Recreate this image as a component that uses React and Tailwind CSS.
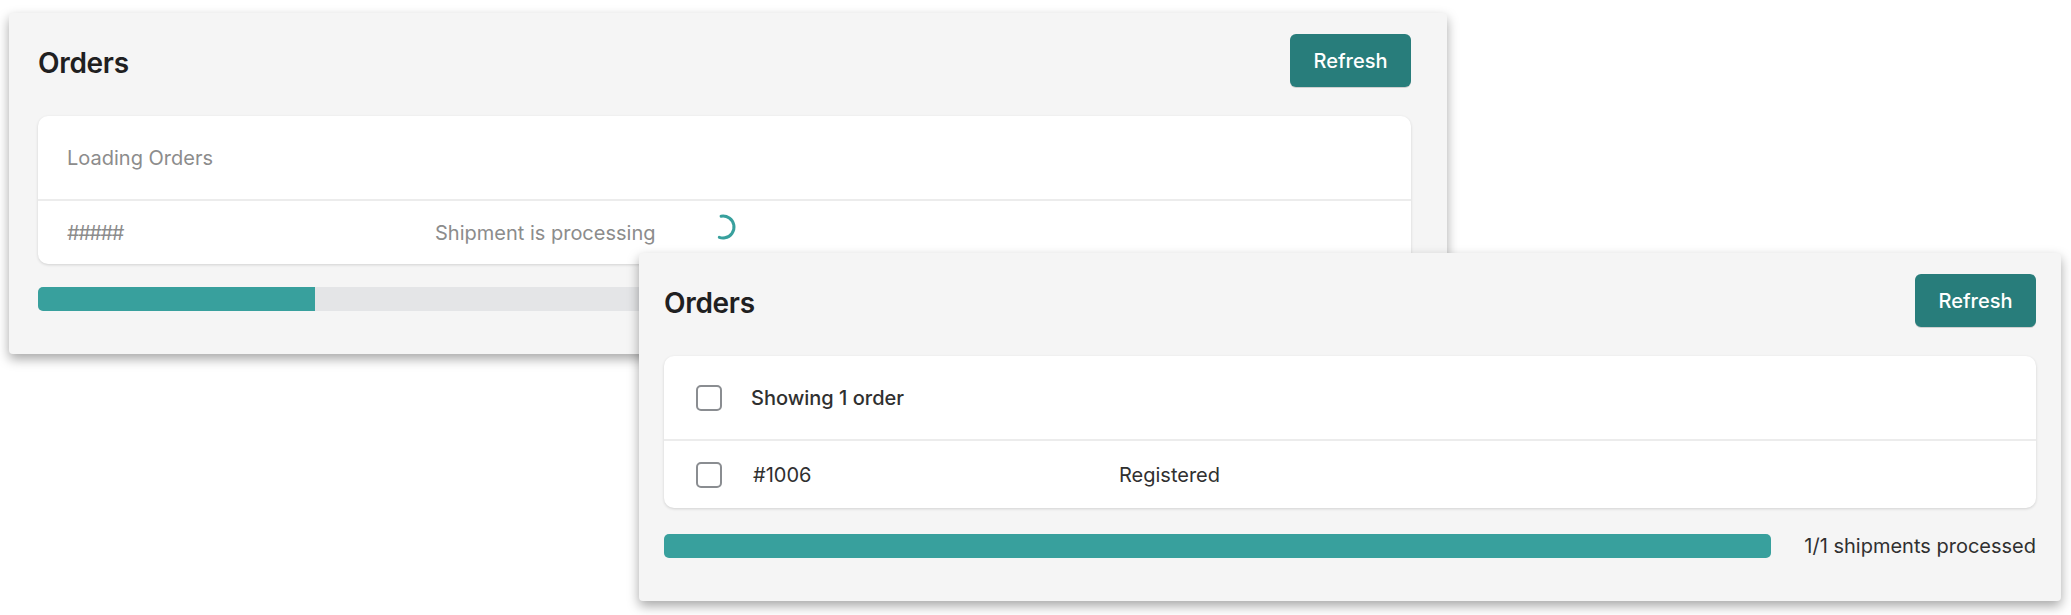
import React from "react";

const font = { fontFamily: "Inter, 'Noto Sans', sans-serif" };

function Spinner() {
  return (
    <svg width="28" height="28" viewBox="0 0 28 28" className="shrink-0 mb-[12px]">
      <circle
        cx="14"
        cy="14"
        r="11"
        fill="none"
        stroke="#38a09d"
        strokeWidth="3"
        strokeLinecap="round"
        strokeDasharray="40 100"
        transform="rotate(-100 14 14)"
      />
    </svg>
  );
}

function Checkbox() {
  return <div className="w-[26px] h-[26px] shrink-0 rounded-[5px] border-[2.5px] border-[#8a8d91] bg-white" />;
}

function Header() {
  return (
    <div className="flex items-center justify-between h-[53px]">
      <h2 className="pt-[5px] text-[28px] font-semibold text-[#1f2021] tracking-[-0.3px]">Orders</h2>
      <button className="w-[121px] h-[53px] rounded-[6px] bg-[#287d7b] text-white text-[20px] font-medium shadow-[0_1px_0_rgba(0,0,0,0.15)]">
        Refresh
      </button>
    </div>
  );
}

export default function App() {
  return (
    <div className="relative w-[2071px] h-[615px] bg-white overflow-hidden" style={font}>
      {/* Card 1: loading state */}
      <div className="absolute left-[9px] top-[13px] w-[1438px] h-[341px] rounded-[4px] bg-[#f5f5f5] shadow-[0_5px_12px_rgba(0,0,0,0.35)] pl-[29px] pr-[36px] pt-[21px]">
        <Header />
        <div className="mt-[29px] rounded-[10px] bg-white shadow-[0_1px_3px_rgba(0,0,0,0.15)]">
          <div className="h-[83px] flex items-center pl-[29px] text-[20px] text-[#8c8c8c]">Loading Orders</div>
          <div className="h-[2px] bg-[#ececec]" />
          <div className="h-[63px] flex items-center pl-[29px] text-[20px] text-[#8c8c8c]">
            <span className="w-[368px] tracking-[-1.5px]">#####</span>
            <span className="w-[274px]">Shipment is processing</span>
            <Spinner />
          </div>
        </div>
        <div className="mt-[23px] h-[24px] rounded-[5px] bg-[#e4e5e7] overflow-hidden">
          <div className="h-full w-[277px] bg-[#38a09d]" />
        </div>
      </div>

      {/* Card 2: loaded state */}
      <div className="absolute left-[639px] top-[253px] w-[1422px] h-[348px] rounded-[4px] bg-[#f5f5f5] shadow-[0_5px_12px_rgba(0,0,0,0.35)] px-[25px] pt-[21px]">
        <Header />
        <div className="mt-[29px] rounded-[10px] bg-white shadow-[0_1px_3px_rgba(0,0,0,0.15)]">
          <div className="h-[83px] flex items-center pl-[32px] gap-[29px]">
            <Checkbox />
            <span className="text-[20px] font-medium text-[#303030]">Showing 1 order</span>
          </div>
          <div className="h-[2px] bg-[#ececec]" />
          <div className="h-[67px] flex items-center pl-[32px] gap-[31px] text-[20px] text-[#303030]">
            <Checkbox />
            <div className="flex items-center">
              <span className="w-[366px]">#1006</span>
              <span>Registered</span>
            </div>
          </div>
        </div>
        <div className="mt-[23px] flex items-center gap-[33px]">
          <div className="flex-1 h-[24px] rounded-[5px] bg-[#e4e5e7] overflow-hidden">
            <div className="h-full w-full bg-[#38a09d]" />
          </div>
          <span className="text-[20px] text-[#303030] whitespace-nowrap">1/1 shipments processed</span>
        </div>
      </div>
    </div>
  );
}
